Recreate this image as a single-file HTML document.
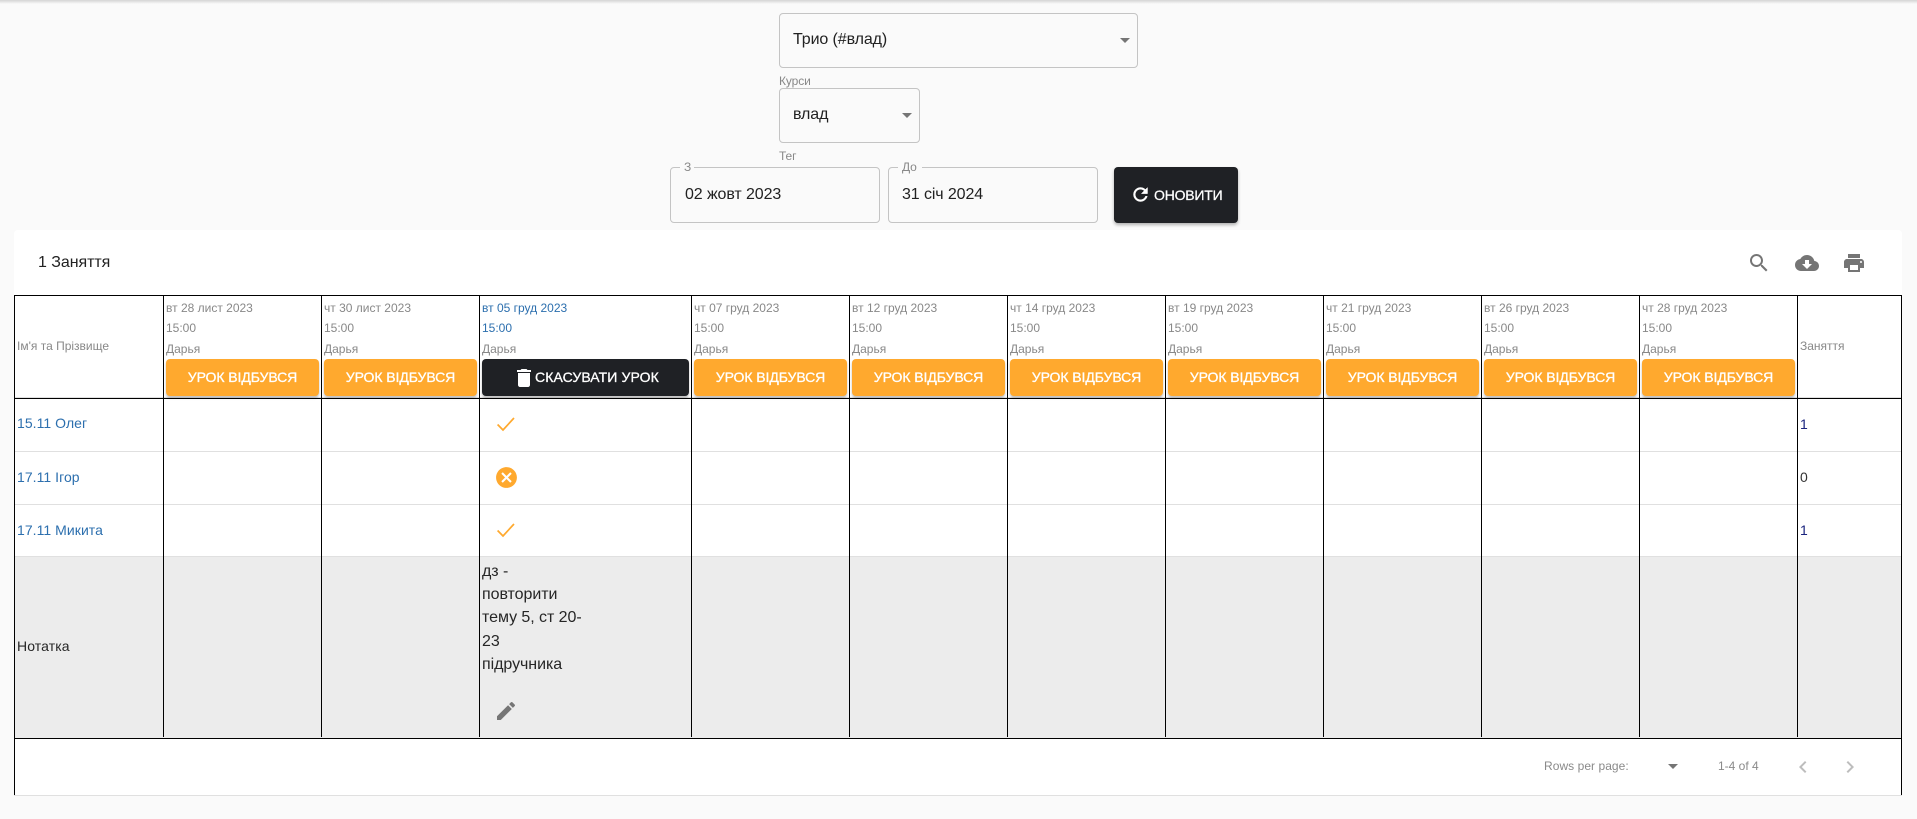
<!DOCTYPE html>
<html lang="uk">
<head>
<meta charset="utf-8">
<title>Заняття</title>
<style>
html,body{margin:0;padding:0;width:1917px;height:819px;overflow:hidden;background:#fafafa;font-family:"Liberation Sans",Arial,sans-serif;}
#r{position:relative;width:1917px;height:819px;overflow:hidden;}
#r div,#r svg{position:absolute;}
.t{white-space:nowrap;line-height:20px;height:20px;}
.box{box-sizing:border-box;border:1px solid #c4c4c4;border-radius:4px;}
.lab{font-size:12px;color:#888;letter-spacing:-.1px;}
.val{font-size:16px;color:#212121;letter-spacing:-.1px;}
.arr{width:0;height:0;border-left:5px solid transparent;border-right:5px solid transparent;border-top:5px solid #757575;}
.k{background:#000;}
.h{font-size:12px;color:#888;letter-spacing:0;}
.hb{color:#2c6fae;}
.btn{top:359px;height:37px;border-radius:4px;background:#ffa92e;color:#fff;font-size:14px;font-weight:400;text-align:center;line-height:37px;box-shadow:0 2px 2px rgba(0,0,0,.25);letter-spacing:-.08px;white-space:nowrap;-webkit-text-stroke:.3px #fff;}
.nm{font-size:14px;color:#2c6fae;left:17px;letter-spacing:.05px;}
.nt{font-size:16px;color:#262626;left:482px;letter-spacing:-.05px;}
.g{background:#e0e0e0;left:15px;width:1887px;height:1px;}
</style>
</head>
<body>
<div id="r">
<div style="left:0;top:0;width:1917px;height:4px;background:linear-gradient(#d4d4d4,#fafafa);"></div>

<div class="box" style="left:779px;top:13px;width:359px;height:55px;"></div>
<div class="t val" style="left:793px;top:30px;">Трио (#влад)</div>
<div class="arr" style="left:1120px;top:38px;"></div>
<div class="t lab" style="left:779px;top:71px;">Курси</div>

<div class="box" style="left:779px;top:88px;width:141px;height:55px;"></div>
<div class="t val" style="left:793px;top:105px;">влад</div>
<div class="arr" style="left:902px;top:113px;"></div>
<div class="t lab" style="left:779px;top:146px;">Тег</div>

<div class="box" style="left:670px;top:167px;width:210px;height:56px;"></div>
<div style="left:680px;top:165px;width:14px;height:4px;background:#fafafa;"></div>
<div class="t lab" style="left:684px;top:157px;">З</div>
<div class="t val" style="left:685px;top:185px;">02 жовт 2023</div>

<div class="box" style="left:888px;top:167px;width:210px;height:56px;"></div>
<div style="left:898px;top:165px;width:24px;height:4px;background:#fafafa;"></div>
<div class="t lab" style="left:902px;top:157px;">До</div>
<div class="t val" style="left:902px;top:185px;">31 січ 2024</div>

<div style="left:1114px;top:167px;width:124px;height:56px;border-radius:4px;background:#1f2125;box-shadow:0 2px 3px rgba(0,0,0,.3);"></div>
<svg style="left:1130px;top:184px;" width="21" height="21" viewBox="0 0 24 24" fill="#fff" stroke="#fff" stroke-width=".5"><path d="M17.65 6.35C16.2 4.9 14.21 4 12 4c-4.42 0-7.99 3.58-7.99 8s3.57 8 7.99 8c3.73 0 6.84-2.55 7.73-6h-2.08c-.82 2.33-3.04 4-5.65 4-3.31 0-6-2.69-6-6s2.69-6 6-6c1.66 0 3.14.69 4.22 1.78L13 11h7V4l-2.35 2.35z"/></svg>
<div class="t" style="left:1154px;top:185px;color:#fff;font-size:14px;letter-spacing:-.2px;-webkit-text-stroke:.25px #fff;">ОНОВИТИ</div>

<div style="left:14px;top:230px;width:1888px;height:566px;background:#fff;border-radius:4px 4px 0 0;"></div>
<div style="left:14px;top:795px;width:1888px;height:1px;background:#e0e0e0;"></div>
<div class="t" style="left:38px;top:253px;font-size:16px;color:#222;letter-spacing:-.05px;">1 Заняття</div>

<svg style="left:1747px;top:251px;" width="24" height="24" viewBox="0 0 24 24" fill="#757575"><path d="M15.5 14h-.79l-.28-.27C15.41 12.59 16 11.11 16 9.5 16 5.91 13.09 3 9.5 3S3 5.91 3 9.5 5.91 16 9.5 16c1.61 0 3.09-.59 4.23-1.57l.27.28v.79l5 4.99L20.49 19l-4.99-5zm-6 0C7.01 14 5 11.99 5 9.5S7.01 5 9.5 5 14 7.01 14 9.5 11.99 14 9.5 14z"/></svg>
<svg style="left:1795px;top:251px;" width="24" height="24" viewBox="0 0 24 24" fill="#757575"><path d="M19.35 10.04C18.67 6.59 15.64 4 12 4 9.11 4 6.6 5.64 5.35 8.04 2.34 8.36 0 10.91 0 14c0 3.31 2.69 6 6 6h13c2.76 0 5-2.24 5-5 0-2.64-2.05-4.78-4.65-4.96zM17 13l-5 5-5-5h3V9h4v4h3z"/></svg>
<svg style="left:1842px;top:251px;" width="24" height="24" viewBox="0 0 24 24" fill="#757575"><path d="M19 8H5c-1.66 0-3 1.34-3 3v6h4v4h12v-4h4v-6c0-1.66-1.34-3-3-3zm-3 11H8v-5h8v5zm3-7c-.55 0-1-.45-1-1s.45-1 1-1 1 .45 1 1-.45 1-1 1zm-1-9H6v4h12V3z"/></svg>

<!-- note row background -->
<div style="left:15px;top:557px;width:1887px;height:181px;background:#ececec;"></div>

<!-- row lines -->
<div class="g" style="top:397px;"></div>
<div class="g" style="top:451px;"></div>
<div class="g" style="top:504px;"></div>
<div class="g" style="top:556px;"></div>
<div class="k" style="left:14px;top:295px;width:1888px;height:1px;"></div>
<div class="k" style="left:14px;top:398px;width:1888px;height:1px;"></div>
<div class="k" style="left:14px;top:738px;width:1888px;height:1px;"></div>

<!-- vertical lines -->
<div class="k" style="left:14px;top:295px;width:1px;height:500px;"></div>
<div class="k" style="left:1901px;top:295px;width:1px;height:500px;"></div>
<div class="k" style="left:163px;top:295px;width:1px;height:442px;"></div>
<div class="k" style="left:321px;top:295px;width:1px;height:442px;"></div>
<div class="k" style="left:479px;top:295px;width:1px;height:442px;"></div>
<div class="k" style="left:691px;top:295px;width:1px;height:442px;"></div>
<div class="k" style="left:849px;top:295px;width:1px;height:442px;"></div>
<div class="k" style="left:1007px;top:295px;width:1px;height:442px;"></div>
<div class="k" style="left:1165px;top:295px;width:1px;height:442px;"></div>
<div class="k" style="left:1323px;top:295px;width:1px;height:442px;"></div>
<div class="k" style="left:1481px;top:295px;width:1px;height:442px;"></div>
<div class="k" style="left:1639px;top:295px;width:1px;height:442px;"></div>
<div class="k" style="left:1797px;top:295px;width:1px;height:442px;"></div>

<!-- header -->
<div class="t h" style="left:17px;top:336px;">Ім'я та Прізвище</div>
<div class="t h" style="left:1800px;top:336px;">Заняття</div>

<div class="t h" style="left:166px;top:298px;">вт 28 лист 2023</div><div class="t h" style="left:166px;top:318px;">15:00</div><div class="t h" style="left:166px;top:339px;">Дарья</div>
<div class="t h" style="left:324px;top:298px;">чт 30 лист 2023</div><div class="t h" style="left:324px;top:318px;">15:00</div><div class="t h" style="left:324px;top:339px;">Дарья</div>
<div class="t h hb" style="left:482px;top:298px;">вт 05 груд 2023</div><div class="t h hb" style="left:482px;top:318px;">15:00</div><div class="t h" style="left:482px;top:339px;">Дарья</div>
<div class="t h" style="left:694px;top:298px;">чт 07 груд 2023</div><div class="t h" style="left:694px;top:318px;">15:00</div><div class="t h" style="left:694px;top:339px;">Дарья</div>
<div class="t h" style="left:852px;top:298px;">вт 12 груд 2023</div><div class="t h" style="left:852px;top:318px;">15:00</div><div class="t h" style="left:852px;top:339px;">Дарья</div>
<div class="t h" style="left:1010px;top:298px;">чт 14 груд 2023</div><div class="t h" style="left:1010px;top:318px;">15:00</div><div class="t h" style="left:1010px;top:339px;">Дарья</div>
<div class="t h" style="left:1168px;top:298px;">вт 19 груд 2023</div><div class="t h" style="left:1168px;top:318px;">15:00</div><div class="t h" style="left:1168px;top:339px;">Дарья</div>
<div class="t h" style="left:1326px;top:298px;">чт 21 груд 2023</div><div class="t h" style="left:1326px;top:318px;">15:00</div><div class="t h" style="left:1326px;top:339px;">Дарья</div>
<div class="t h" style="left:1484px;top:298px;">вт 26 груд 2023</div><div class="t h" style="left:1484px;top:318px;">15:00</div><div class="t h" style="left:1484px;top:339px;">Дарья</div>
<div class="t h" style="left:1642px;top:298px;">чт 28 груд 2023</div><div class="t h" style="left:1642px;top:318px;">15:00</div><div class="t h" style="left:1642px;top:339px;">Дарья</div>

<!-- buttons -->
<div class="btn" style="left:166px;width:153px;">УРОК ВІДБУВСЯ</div>
<div class="btn" style="left:324px;width:153px;">УРОК ВІДБУВСЯ</div>
<div class="btn" style="left:482px;width:207px;background:#1f2125;"></div>
<svg style="left:512px;top:366px;" width="24" height="24" viewBox="0 0 24 24" fill="#fff"><path d="M6 19c0 1.1.9 2 2 2h8c1.1 0 2-.9 2-2V7H6v12zM19 4h-3.5l-1-1h-5l-1 1H5v2h14V4z"/></svg>
<div class="t" style="left:535px;top:367px;color:#fff;font-size:14px;letter-spacing:.1px;-webkit-text-stroke:.3px #fff;">СКАСУВАТИ УРОК</div>
<div class="btn" style="left:694px;width:153px;">УРОК ВІДБУВСЯ</div>
<div class="btn" style="left:852px;width:153px;">УРОК ВІДБУВСЯ</div>
<div class="btn" style="left:1010px;width:153px;">УРОК ВІДБУВСЯ</div>
<div class="btn" style="left:1168px;width:153px;">УРОК ВІДБУВСЯ</div>
<div class="btn" style="left:1326px;width:153px;">УРОК ВІДБУВСЯ</div>
<div class="btn" style="left:1484px;width:153px;">УРОК ВІДБУВСЯ</div>
<div class="btn" style="left:1642px;width:153px;">УРОК ВІДБУВСЯ</div>

<!-- rows -->
<div class="t nm" style="top:413px;">15.11 Олег</div>
<div class="t nm" style="top:467px;">17.11 Ігор</div>
<div class="t nm" style="top:520px;">17.11 Микита</div>
<div class="t" style="left:1800px;top:414px;font-size:14px;color:#1a237e;">1</div>
<div class="t" style="left:1800px;top:467px;font-size:14px;color:#333;">0</div>
<div class="t" style="left:1800px;top:520px;font-size:14px;color:#1a237e;">1</div>

<svg style="left:490px;top:409px;" width="32" height="32" viewBox="490 410 32 32" fill="none" stroke="#ffa92e" stroke-width="1.7"><path d="M497.6 425.5L503 431L514 419"/></svg>
<svg style="left:494px;top:465px;" width="25" height="25" viewBox="0 0 24 24" fill="#ffa92e"><path d="M12 2C6.47 2 2 6.47 2 12s4.47 10 10 10 10-4.47 10-10S17.53 2 12 2zm5 13.59L15.59 17 12 13.41 8.41 17 7 15.59 10.59 12 7 8.41 8.41 7 12 10.59 15.59 7 17 8.41 13.41 12 17 15.59z"/></svg>
<svg style="left:490px;top:515px;" width="32" height="32" viewBox="490 410 32 32" fill="none" stroke="#ffa92e" stroke-width="1.7"><path d="M497.6 425.5L503 431L514 419"/></svg>

<!-- note -->
<div class="t" style="left:17px;top:636px;font-size:14px;color:#262626;letter-spacing:.1px;">Нотатка</div>
<div class="t nt" style="top:562px;">дз -</div>
<div class="t nt" style="top:585px;">повторити</div>
<div class="t nt" style="top:608px;">тему 5, ст 20-</div>
<div class="t nt" style="top:632px;">23</div>
<div class="t nt" style="top:655px;">підручника</div>
<svg style="left:494px;top:699px;" width="24" height="24" viewBox="0 0 24 24" fill="#757575"><path d="M3 17.25V21h3.75L17.81 9.94l-3.75-3.75L3 17.25zM20.71 7.04c.39-.39.39-1.02 0-1.41l-2.34-2.34c-.39-.39-1.02-.39-1.41 0l-1.83 1.83 3.75 3.75 1.83-1.83z"/></svg>

<!-- pagination -->
<div class="t" style="left:1544px;top:756px;font-size:12px;color:#8a8a8a;letter-spacing:.05px;">Rows per page:</div>
<div class="arr" style="left:1668px;top:764px;"></div>
<div class="t" style="left:1718px;top:756px;font-size:12px;color:#8a8a8a;">1-4 of 4</div>
<svg style="left:1791px;top:755px;" width="24" height="24" viewBox="0 0 24 24" fill="#bdbdbd"><path d="M15.41 7.41L14 6l-6 6 6 6 1.41-1.41L10.83 12z"/></svg>
<svg style="left:1838px;top:755px;" width="24" height="24" viewBox="0 0 24 24" fill="#bdbdbd"><path d="M10 6L8.59 7.41 13.17 12l-4.58 4.59L10 18l6-6z"/></svg>
</div>
</body>
</html>
